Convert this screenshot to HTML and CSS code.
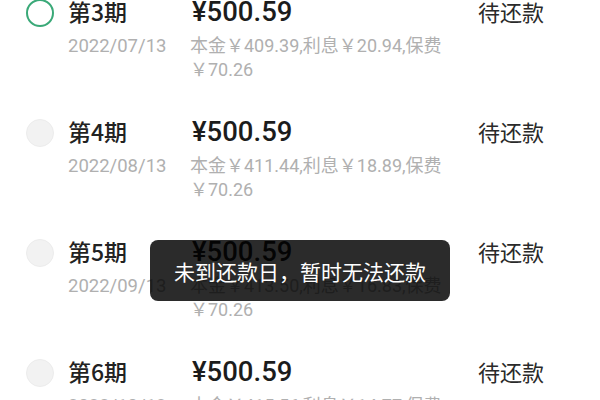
FILE: index.html
```html
<!DOCTYPE html>
<html lang="zh-CN">
<head>
<meta charset="utf-8">
<link rel="stylesheet" href="styles.css">
</head>
<body>
<div class="page">
  <ul class="list">
    <li class="row">
      <span class="radio radio-active"></span>
      <div class="body">
        <div class="top">
          <span class="title">第3期</span>
          <span class="amount">¥500.59</span>
          <span class="status">待还款</span>
        </div>
        <div class="sub">
          <span class="date">2022/07/13</span>
          <span class="detail">本金￥409.39,利息￥20.94,保费￥70.26</span>
        </div>
      </div>
    </li>
    <li class="row">
      <span class="radio"></span>
      <div class="body">
        <div class="top">
          <span class="title">第4期</span>
          <span class="amount">¥500.59</span>
          <span class="status">待还款</span>
        </div>
        <div class="sub">
          <span class="date">2022/08/13</span>
          <span class="detail">本金￥411.44,利息￥18.89,保费￥70.26</span>
        </div>
      </div>
    </li>
    <li class="row">
      <span class="radio"></span>
      <div class="body">
        <div class="top">
          <span class="title">第5期</span>
          <span class="amount">¥500.59</span>
          <span class="status">待还款</span>
        </div>
        <div class="sub">
          <span class="date">2022/09/13</span>
          <span class="detail">本金￥413.50,利息￥16.83,保费￥70.26</span>
        </div>
      </div>
    </li>
    <li class="row">
      <span class="radio"></span>
      <div class="body">
        <div class="top">
          <span class="title">第6期</span>
          <span class="amount">¥500.59</span>
          <span class="status">待还款</span>
        </div>
        <div class="sub">
          <span class="date">2022/10/13</span>
          <span class="detail">本金￥415.56,利息￥14.77,保费￥70.26</span>
        </div>
      </div>
    </li>
  </ul>
  <div class="toast">未到还款日，暂时无法还款</div>
</div>
</body>
</html>
```

FILE: styles.css
```css
html, body {
  margin: 0;
  padding: 0;
  background: #ffffff;
}
body {
  font-family: Roboto, "Noto Sans CJK SC", sans-serif;
  color: #222;
}
.page {
  position: relative;
  width: 600px;
  height: 400px;
  overflow: hidden;
}
.list {
  list-style: none;
  margin: -3px 0 0 0;
  padding: 0;
}
.row {
  display: flex;
  align-items: flex-start;
  height: 120px;
  padding-left: 26px;
  box-sizing: border-box;
}
.radio {
  flex: none;
  width: 28px;
  height: 28px;
  box-sizing: border-box;
  border-radius: 50%;
  background: #f2f2f2;
  border: 1px solid #ececec;
  margin-right: 14px;
  margin-top: 2px;
}
.radio-active {
  background: #fff;
  border: 2px solid #3aa978;
}
.body {
  flex: 1;
}
.top {
  display: flex;
  align-items: center;
  height: 28px;
}
.title {
  width: 124px;
  font-family: "Noto Sans CJK SC", sans-serif;
  font-size: 23px;
  font-weight: 500;
  color: #222;
}
.amount {
  font-family: Roboto, sans-serif;
  font-size: 27.5px;
  font-weight: 500;
  color: #1c1c1c;
}
.status {
  margin-left: auto;
  margin-right: 56px;
  font-family: "Noto Sans CJK SC", sans-serif;
  font-size: 22px;
  color: #2a2a2a;
}
.sub {
  display: flex;
  margin-top: 9px;
  color: #b0b0b0;
  line-height: 24px;
}
.date {
  width: 122px;
  font-size: 18.5px;
}
.detail {
  width: 280px;
  font-family: Roboto, "Noto Sans CJK SC", sans-serif;
  font-size: 18px;
}
.toast {
  position: absolute;
  left: 150px;
  top: 240px;
  width: 300px;
  height: 61px;
  border-radius: 8px;
  background: rgba(0, 0, 0, 0.83);
  color: #fff;
  display: flex;
  align-items: center;
  justify-content: center;
  font-family: "Noto Sans CJK SC", sans-serif;
  font-size: 21px;
}
```
